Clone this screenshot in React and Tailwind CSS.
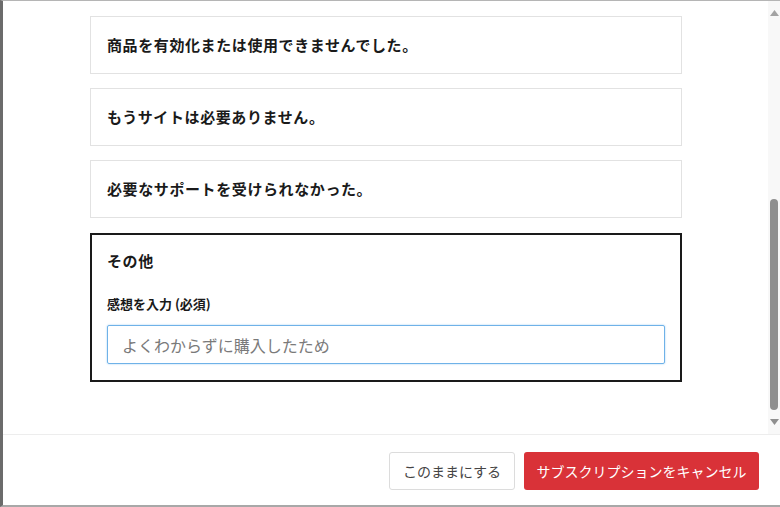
const reasons = [
    '商品を有効化または使用できませんでした。',
    'もうサイトは必要ありません。',
    '必要なサポートを受けられなかった。',
];

function ScrollBar() {
    return (
        <div className="w-[12px] flex flex-col items-center bg-[#f8f8f8]">
            <svg width="9" height="6" viewBox="0 0 9 6" className="mt-[9px]">
                <path d="M0 6 L4.5 0 L9 6 Z" fill="#a3a3a3" />
            </svg>
            <div className="w-[8px] h-[211px] mt-[183px] rounded-full bg-[#8f8f8f]"></div>
            <svg width="9" height="6" viewBox="0 0 9 6" className="mt-[9px]">
                <path d="M0 0 L9 0 L4.5 6 Z" fill="#8f8f8f" />
            </svg>
        </div>
    );
}

export default function App() {
    return (
        <div
            className="w-[780px] h-[507px] bg-white border-l-[3px] border-t border-b-2 border-l-[#6b6b6b] border-t-[#b5b5b5] border-b-[#a8a8a8] flex flex-col overflow-hidden"
            style={{ fontFamily: '"Noto Sans CJK JP", "Noto Sans", sans-serif' }}
        >
            <div className="h-[433px] flex">
                <div className="flex-1 pt-[15px] pl-[87px] pr-[86px] flex flex-col gap-[14px]">
                    {reasons.map((text, i) => (
                        <div
                            key={i}
                            className="h-[58px] border border-[#e2e2e2] bg-white flex items-center px-[16px]"
                        >
                            <span className="text-[15px] font-bold text-[#1a1a1a] tracking-[0.6px]">{text}</span>
                        </div>
                    ))}
                    <div className="h-[149px] mt-[1px] border-2 border-[#1a1a1a] px-[15px] pt-[14px]">
                        <p className="text-[15px] font-bold text-[#1a1a1a] leading-[24px] tracking-[0.6px]">その他</p>
                        <p className="text-[13px] font-bold text-[#1a1a1a] leading-[18px] mt-[22px]">
                            感想を入力 (必須)
                        </p>
                        <input
                            className="mt-[12px] w-full h-[39px] border border-[#6fb2e8] rounded-[2px] px-[14px] text-[16px] text-[#333] placeholder:text-[#7a7a7a] shadow-[0_0_2px_#9ccbf0] outline-none"
                            placeholder="よくわからずに購入したため"
                        />
                    </div>
                </div>
                <ScrollBar />
            </div>
            <div className="flex-1 border-t border-[#ededed] flex justify-end items-start gap-[9px] pt-[17px] pr-[21px]">
                <button className="h-[38px] w-[126px] border border-[#dcdcdc] rounded-[3px] bg-white text-[14px] text-[#444] whitespace-nowrap">
                    このままにする
                </button>
                <button className="h-[38px] w-[235px] rounded-[3px] bg-[#d93238] text-[14px] text-white whitespace-nowrap">
                    サブスクリプションをキャンセル
                </button>
            </div>
        </div>
    );
}
